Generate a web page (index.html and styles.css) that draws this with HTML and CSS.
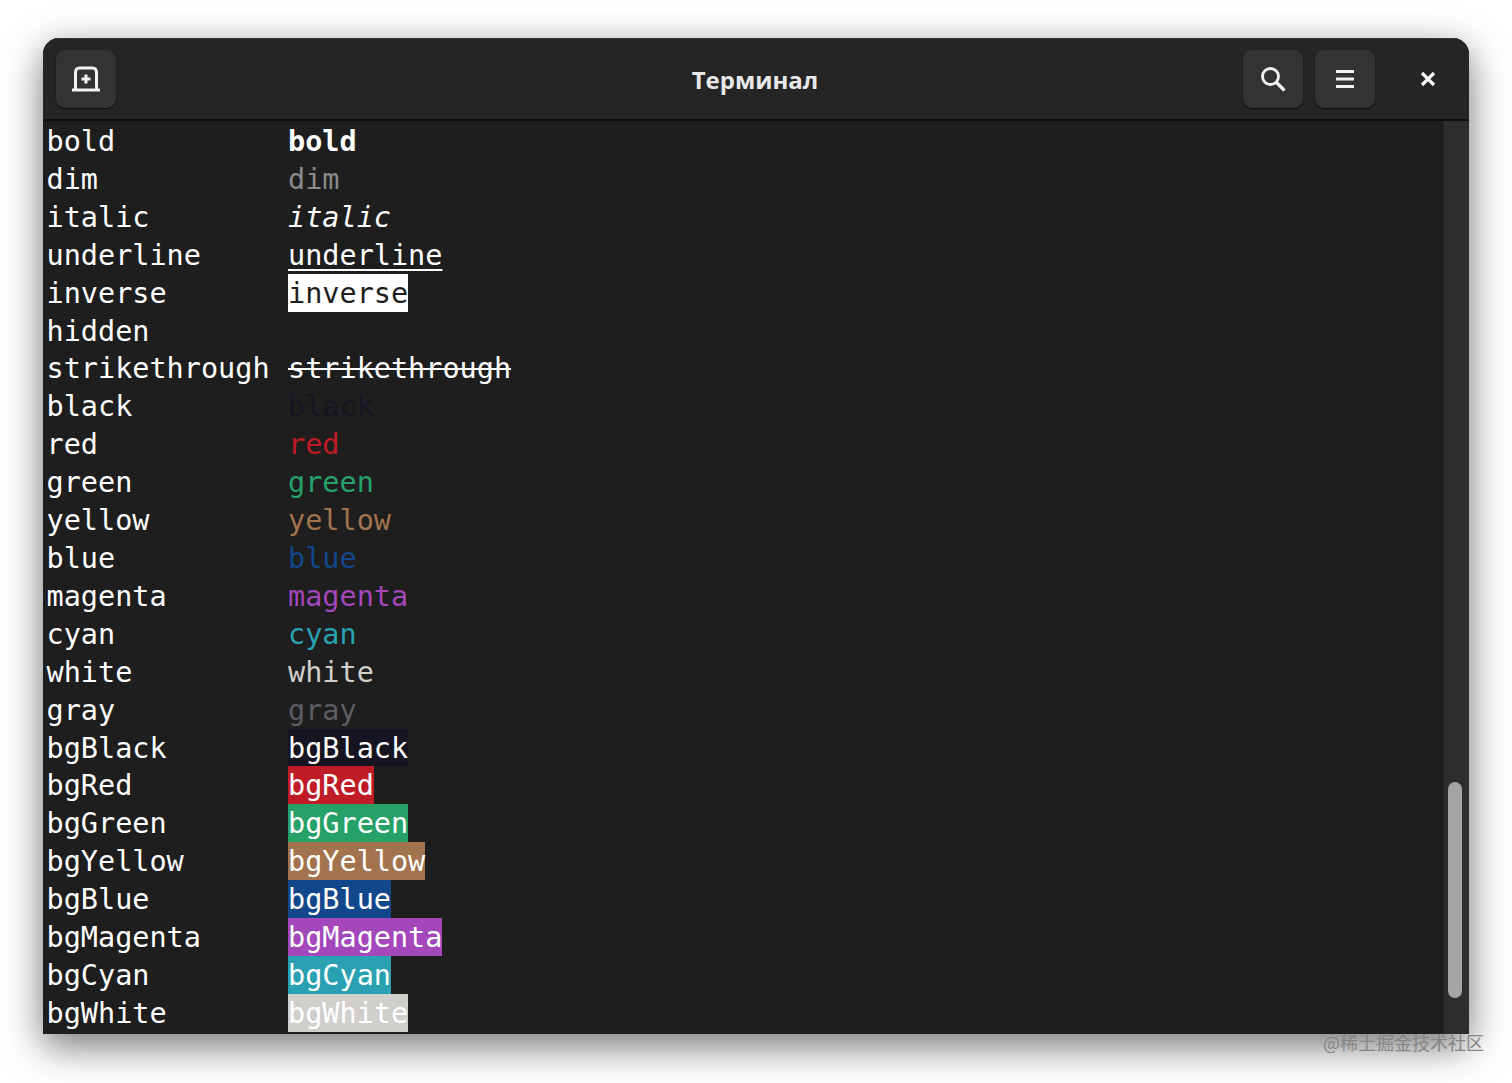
FILE: index.html
```html
<!DOCTYPE html>
<html lang="ru">
<head>
<meta charset="utf-8">
<title>Терминал</title>
<link rel="stylesheet" href="styles.css">
</head>
<body>
<div class="window">
  <header class="titlebar">
    <div class="bar-start">
      <button class="btn" aria-label="new tab">
        <svg width="28" height="26" viewBox="0 0 28 26"><path d="M3.500 24V6.500C3.500 3.500 5 2 7.500 2h13c2.500 0 4 1.500 4 4.500V24" fill="none" stroke="#f2f2f2" stroke-width="3"/><rect x="0" y="22.500" width="28" height="3" fill="#f2f2f2"/><path d="M14 8.500v9M9.500 13h9" stroke="#f2f2f2" stroke-width="3"/></svg>
      </button>
    </div>
    <div class="title">Терминал</div>
    <div class="bar-end">
      <button class="btn" aria-label="search">
        <svg width="26" height="26" viewBox="0 0 26 26"><circle cx="10.500" cy="10.500" r="8" fill="none" stroke="#f2f2f2" stroke-width="2.800"/><path d="M16.500 16.500L24.500 24.500" stroke="#f2f2f2" stroke-width="3.200"/></svg>
      </button>
      <button class="btn" aria-label="menu">
        <svg width="20" height="20" viewBox="0 0 20 20"><path d="M1 2.500h18M1 10h18M1 17.500h18" stroke="#f2f2f2" stroke-width="3"/></svg>
      </button>
      <button class="close" aria-label="close">
        <svg width="16" height="16" viewBox="0 0 16 16"><path d="M2 2l12 12M14 2L2 14" stroke="#f5f5f5" stroke-width="3.200"/></svg>
      </button>
    </div>
  </header>
  <div class="content">
    <main class="term">
      <div class="row"><span class="label">bold</span><span class="bold">bold</span></div>
      <div class="row"><span class="label">dim</span><span class="dim">dim</span></div>
      <div class="row"><span class="label">italic</span><span class="italic">italic</span></div>
      <div class="row"><span class="label">underline</span><span class="underline">underline</span></div>
      <div class="row"><span class="label">inverse</span><span class="inverse">inverse</span></div>
      <div class="row"><span class="label">hidden</span><span class="hidden">hidden</span></div>
      <div class="row"><span class="label">strikethrough</span><span class="strike">strikethrough</span></div>
      <div class="row"><span class="label">black</span><span class="fg-black">black</span></div>
      <div class="row"><span class="label">red</span><span class="fg-red">red</span></div>
      <div class="row"><span class="label">green</span><span class="fg-green">green</span></div>
      <div class="row"><span class="label">yellow</span><span class="fg-yellow">yellow</span></div>
      <div class="row"><span class="label">blue</span><span class="fg-blue">blue</span></div>
      <div class="row"><span class="label">magenta</span><span class="fg-magenta">magenta</span></div>
      <div class="row"><span class="label">cyan</span><span class="fg-cyan">cyan</span></div>
      <div class="row"><span class="label">white</span><span class="fg-white">white</span></div>
      <div class="row"><span class="label">gray</span><span class="fg-gray">gray</span></div>
      <div class="row"><span class="label">bgBlack</span><span class="bg bg-black">bgBlack</span></div>
      <div class="row"><span class="label">bgRed</span><span class="bg bg-red">bgRed</span></div>
      <div class="row"><span class="label">bgGreen</span><span class="bg bg-green">bgGreen</span></div>
      <div class="row"><span class="label">bgYellow</span><span class="bg bg-yellow">bgYellow</span></div>
      <div class="row"><span class="label">bgBlue</span><span class="bg bg-blue">bgBlue</span></div>
      <div class="row"><span class="label">bgMagenta</span><span class="bg bg-magenta">bgMagenta</span></div>
      <div class="row"><span class="label">bgCyan</span><span class="bg bg-cyan">bgCyan</span></div>
      <div class="row"><span class="label">bgWhite</span><span class="bg bg-white">bgWhite</span></div>
    </main>
    <aside class="trough"><div class="thumb"></div></aside>
  </div>
</div>
<div class="watermark">@稀土掘金技术社区</div>
</body>
</html>
```

FILE: styles.css
```css
* { box-sizing: border-box; }
html, body { margin: 0; height: 100%; }
body {
  background: #ffffff;
  padding: 38px 43px 49px;
  overflow: hidden;
  position: relative;
}
.window {
  width: 1426px;
  height: 996px;
  display: flex;
  flex-direction: column;
  background: #1e1e1e;
  border-radius: 16px 16px 0 0;
  overflow: hidden;
}
body::before {
  content: "";
  position: absolute;
  left: 43px;
  top: 38px;
  width: 1426px;
  height: 996px;
  border-radius: 16px 16px 0 0;
  box-shadow: 0 12px 38px rgba(0, 0, 0, 0.55);
}
.titlebar {
  flex: none;
  height: 83px;
  display: grid;
  grid-template-columns: 1fr auto 1fr;
  align-items: center;
  background: #252525;
  border-top: 1px solid #3a3a3a;
  border-bottom: 2px solid #0e0e0e;
  padding: 0 13px;
  position: relative;
}
.bar-start { display: flex; }
.bar-end { display: flex; justify-content: flex-end; gap: 12px; align-items: center; }
.btn {
  width: 60px;
  height: 58px;
  padding: 0;
  display: flex;
  align-items: center;
  justify-content: center;
  background: #333333;
  border: 0;
  border-radius: 9px;
  box-shadow: 0 1px 1px #0f0f0f, 0 0 0 1px #232323;
}
.close {
  width: 56px;
  height: 58px;
  margin-left: 13px;
  padding: 0;
  display: flex;
  align-items: center;
  justify-content: center;
  background: transparent;
  border: 0;
}
.title {
  font-family: "Open Sans", "Noto Sans", sans-serif;
  font-weight: 700;
  font-size: 24px;
  color: #e8e8e8;
  margin-right: 2px;
}
.content { flex: 1; display: flex; min-height: 0; }
.term {
  flex: 1;
  padding: 1px 0 0 4px;
  font-family: "DejaVu Sans Mono", "Liberation Mono", monospace;
  font-size: 28.5px;
  line-height: 39.92px;
  color: #ffffff;
  background: #1e1e1e;
  overflow: hidden;
}
.row { display: flex; height: 37.92px; white-space: pre; }
.label { width: 241.5px; margin-left: -0.5px; flex: none; }
.bold { font-weight: 700; }
.dim { color: #8a8a8a; }
.italic { font-style: italic; }
.underline { text-decoration: underline; text-decoration-thickness: 2px; text-underline-offset: 4px; }
.inverse { background: #ffffff; color: #1e1e1e; }
.hidden { visibility: hidden; }
.strike { text-decoration: line-through; text-decoration-thickness: 2px; }
.fg-black { color: #171421; }
.fg-red { color: #c01c28; }
.fg-green { color: #26a269; }
.fg-yellow { color: #a2734c; }
.fg-blue { color: #12488b; }
.fg-magenta { color: #a347ba; }
.fg-cyan { color: #2aa1b3; }
.fg-white { color: #d0cfcc; }
.fg-gray { color: #5e5c64; }
.bg-black { background: #171421; }
.bg-red { background: #c01c28; }
.bg-green { background: #26a269; }
.bg-yellow { background: #a2734c; }
.bg-blue { background: #12488b; }
.bg-magenta { background: #a347ba; }
.bg-cyan { background: #2aa1b3; }
.bg-white { background: #d0cfcc; }
.trough {
  flex: none;
  width: 26px;
  background: #2d2d2d;
  border-left: 1px solid #242424;
  display: flex;
  flex-direction: column;
  justify-content: flex-end;
  align-items: flex-start;
  padding: 0 0 36px 4px;
}
.thumb {
  width: 14px;
  height: 216px;
  border-radius: 7px;
  background: #a4a4a4;
}
.watermark {
  position: absolute;
  left: 1323px;
  top: 1028px;
  font-family: "Noto Sans CJK SC", "DejaVu Sans", sans-serif;
  font-size: 18px;
  line-height: 28px;
  color: #858585;
  white-space: nowrap;
}
```
